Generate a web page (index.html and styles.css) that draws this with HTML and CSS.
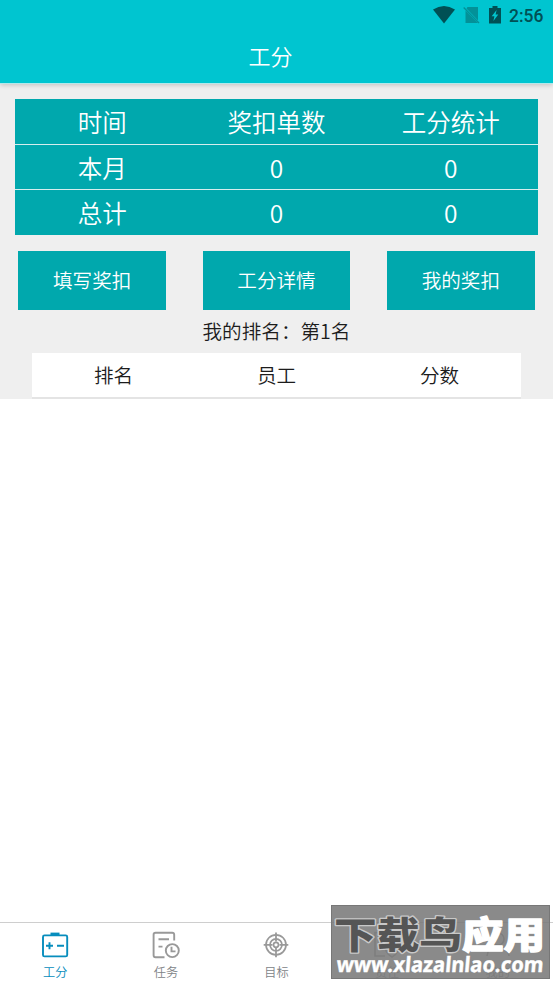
FILE: index.html
```html
<!DOCTYPE html>
<html lang="zh-CN">
<head>
<meta charset="utf-8">
<title>工分</title>
<link rel="stylesheet" href="styles.css">
</head>
<body>
<div class="app">
  <header class="header">
    <div class="status">
      <svg class="wifi" width="22" height="18" viewBox="0 0 22 18"><path d="M0 3.5Q11-3.5 22 3.5L11 17.5Z" fill="#005055"/></svg>
      <svg class="sim" width="17" height="18" viewBox="0 0 17 18"><path d="M2.5 4.500 15 17H2.500ZM4.500 1H15V14.500L3.500 2.500Z" fill="#039198"/><path d="M.7 1.500 16 17" stroke="#039198" stroke-width="1.400"/></svg>
      <svg class="battery" width="12" height="18" viewBox="0 0 12 18"><path d="M0 2H3.5V0H8.5V2H12V17.5H0Z" fill="#005055"/><path d="M7.6 4 2.7 10.3H5.4L4.4 15 9.3 8.600H6.600Z" fill="#00c5ce"/></svg>
      <span class="clock">2:56</span>
    </div>
    <h1 class="title">工分</h1>
  </header>
  <main class="main">
    <section class="summary">
      <div class="row"><span>时间</span><span>奖扣单数</span><span>工分统计</span></div>
      <div class="row"><span>本月</span><span>0</span><span>0</span></div>
      <div class="row"><span>总计</span><span>0</span><span>0</span></div>
    </section>
    <div class="actions">
      <button>填写奖扣</button><button>工分详情</button><button>我的奖扣</button>
    </div>
    <p class="rank">我的排名：第1名</p>
    <div class="ranking"><span>排名</span><span>员工</span><span>分数</span></div>
  </main>
  <nav class="tabs">
    <div class="tab active">
      <svg width="28" height="28" viewBox="0 0 28 28" fill="none" stroke="currentColor" stroke-width="1.9"><rect x="2" y="4.4" width="24.2" height="21" rx="1.5"/><path d="M9.5 2.9H18.5" stroke-width="2.6"/><path d="M5 14.8H12M8.5 11.3V18.3M16 14.8H23"/></svg>
      <span>工分</span>
    </div>
    <div class="tab">
      <svg width="28" height="28" viewBox="0 0 28 28" fill="none" stroke="currentColor" stroke-width="1.9"><path d="M22.2 9.5V3.7Q22.2 1.8 20.3 1.8H3.5Q1.6 1.8 1.6 3.7V24.3Q1.6 26.3 3.5 26.3H12.5M6.5 8.3H17M6.5 15.6H10.5"/><circle cx="20.3" cy="19.6" r="6.5"/><path d="M19.5 15.8V20.4H23.5"/></svg>
      <span>任务</span>
    </div>
    <div class="tab">
      <svg width="28" height="28" viewBox="0 0 28 28" fill="none" stroke="currentColor" stroke-width="1.7"><circle cx="14" cy="13.8" r="10"/><circle cx="14" cy="13.8" r="6"/><circle cx="14" cy="13.8" r="2.5"/><path d="M14 1.6V10.5M14 17V26.3M1.7 13.8H10.5M17.5 13.8H26.3" stroke-width="1.8"/></svg>
      <span>目标</span>
    </div>
    <div class="tab">
      <svg width="28" height="28" viewBox="0 0 28 28" fill="none" stroke="currentColor" stroke-width="1.6"><path d="M23 10V1.6H2V25H12M7 8H18M7 14H11M13 14 19 12 25 14V20Q23 24 19 26 15 24 13 20ZM16 19 18.5 21 22.5 17"/></svg>
      <span>责任</span>
    </div>
    <div class="tab">
      <svg width="28" height="28" viewBox="0 0 28 28" fill="none" stroke="currentColor" stroke-width="1.6"><circle cx="14" cy="8" r="6"/><path d="M3 25Q4 15 14 15T25 25"/></svg>
      <span>我的</span>
    </div>
  </nav>
  <div class="watermark">
    <svg width="219" height="74" viewBox="0 0 219 74">
      <g class="brand" transform="translate(0 44) scale(1 .88)">
        <text class="dark" x="3" y="0" textLength="128" lengthAdjust="spacingAndGlyphs">下载鸟</text>
        <text class="light" x="131" y="0" textLength="83" lengthAdjust="spacingAndGlyphs">应用</text>
      </g>
      <text class="url" transform="translate(5 67) skewX(-5)" textLength="207" lengthAdjust="spacingAndGlyphs">www.xlazalnlao.com</text>
    </svg>
  </div>
</div>
</body>
</html>
```
FILE: styles.css
```css
* { box-sizing: border-box; }
body { margin: 0; font-family: "Noto Sans CJK SC", sans-serif; background: #fff; color: #1c1c1c; }
.app { position: relative; width: 553px; height: 983px; display: flex; flex-direction: column; overflow: hidden; }
.header { height: 84px; flex: none; background: #00c5d0; color: #fff; border-bottom: 1px solid #b5e8ea; box-shadow: 0 1px 5px rgba(0,0,0,.2); z-index: 1; }
.status { height: 30px; display: flex; align-items: center; justify-content: flex-end; padding-right: 10px; }
.wifi { margin-right: 8px; }
.sim { margin-right: 9px; }
.battery { margin: 0 8px 1px 0; }
.clock { font: 500 17.5px/30px Roboto, sans-serif; color: #005055; width: 34px; padding-top: 1px; white-space: nowrap; }
.title { margin: 0; padding: 0 12px 0 0; font-size: 22px; line-height: 50px; font-weight: 350; text-align: center; }
.main { height: 315px; flex: none; background: #efefef; padding: 15.4px 15px 0; }
.summary { display: flex; flex-direction: column; gap: 1px; color: #fff; background: #d5eeee; }
.row { display: grid; grid-template-columns: repeat(3, 1fr); height: 44.5px; background: #00a8ad; font-size: 24.5px; line-height: 45px; font-weight: 350; text-align: center; }
.actions { display: flex; justify-content: space-between; margin: 16.1px 3.4px 0; }
.actions button { width: 147.6px; height: 59px; padding: 0 0 2px; border: 0; background: #00a8ad; color: #fff; font: 350 19.6px/57px "Noto Sans CJK SC", sans-serif; }
.rank { margin: 0; height: 43px; font-size: 19.6px; line-height: 42px; text-align: center; font-weight: 350; }
.ranking { display: grid; grid-template-columns: repeat(3, 1fr); height: 46px; margin: 0 17px; background: #fff; border-bottom: 2px solid #e4e4e4; font-size: 19.6px; line-height: 44px; font-weight: 350; text-align: center; }
.tabs { height: 61px; flex: none; margin-top: auto; display: grid; grid-template-columns: repeat(5, 1fr); border-top: 1px solid #cecece; }
.tab { display: flex; flex-direction: column; align-items: center; padding-top: 8px; color: #999; font-size: 12.2px; line-height: 18px; }
.tab span { margin-top: 4px; font-weight: 350; color: #808387; }
.tab.active, .tab.active span { color: #078dbd; }
.watermark { position: absolute; left: 331px; top: 905px; width: 219px; height: 74px; background: rgba(122,122,122,.88); border: 1px solid #777; }
.watermark svg { display: block; margin: -1px; }
.brand text { font: 900 42px "Noto Sans CJK SC", sans-serif; paint-order: stroke; stroke-linejoin: round; }
.brand .dark { fill: #555; stroke: #c8c8c8; stroke-width: 3px; }
.brand .light { fill: #fff; stroke: #fff; stroke-width: 1.5px; }
.url { font: 700 21px "Noto Sans", sans-serif; fill: #fff; stroke: #fff; stroke-width: .4px; }
```
